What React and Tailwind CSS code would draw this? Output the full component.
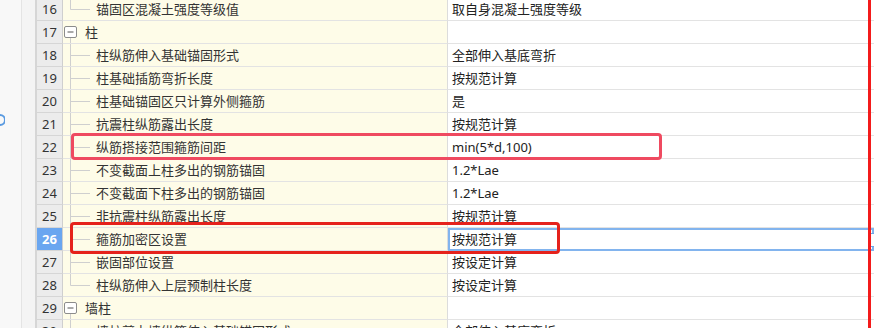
import React from "react";

const rows = [
  { n: 16, type: "child", last: true, name: "锚固区混凝土强度等级值", value: "取自身混凝土强度等级" },
  { n: 17, type: "parent", name: "柱", value: "" },
  { n: 18, type: "child", name: "柱纵筋伸入基础锚固形式", value: "全部伸入基底弯折" },
  { n: 19, type: "child", name: "柱基础插筋弯折长度", value: "按规范计算" },
  { n: 20, type: "child", name: "柱基础锚固区只计算外侧箍筋", value: "是" },
  { n: 21, type: "child", name: "抗震柱纵筋露出长度", value: "按规范计算" },
  { n: 22, type: "child", name: "纵筋搭接范围箍筋间距", value: "min(5*d,100)" },
  { n: 23, type: "child", name: "不变截面上柱多出的钢筋锚固", value: "1.2*Lae" },
  { n: 24, type: "child", name: "不变截面下柱多出的钢筋锚固", value: "1.2*Lae" },
  { n: 25, type: "child", name: "非抗震柱纵筋露出长度", value: "按规范计算" },
  { n: 26, type: "child", name: "箍筋加密区设置", value: "按规范计算", sel: true },
  { n: 27, type: "child", name: "嵌固部位设置", value: "按设定计算" },
  { n: 28, type: "child", last: true, name: "柱纵筋伸入上层预制柱长度", value: "按设定计算" },
  { n: 29, type: "parent", name: "墙柱", value: "" },
  { n: 30, type: "child", name: "墙柱剪力墙纵筋伸入基础锚固形式", value: "全部伸入基底弯折" },
];

function TreeChild({ last }) {
  return (
    <svg width="33" height="22" className="shrink-0">
      <line x1="7.5" y1="0" x2="7.5" y2={last ? 11.5 : 22} stroke="#cfcfcf" strokeWidth="1" />
      <line x1="7.5" y1="11.5" x2="27" y2="11.5" stroke="#cfcfcf" strokeWidth="1" />
    </svg>
  );
}

function TreeParent() {
  return (
    <svg width="22" height="22" className="shrink-0">
      <line x1="7.5" y1="17" x2="7.5" y2="22" stroke="#cfcfcf" strokeWidth="1" />
      <rect x="1.5" y="5.5" width="12" height="11" rx="1.5" fill="#ffffff" stroke="#8c8c8c" strokeWidth="1" />
      <line x1="4.5" y1="11" x2="10.5" y2="11" stroke="#555555" strokeWidth="1" />
    </svg>
  );
}

function Row({ r }) {
  return (
    <div className="flex h-[23px] shrink-0">
      <div
        className={
          r.sel
            ? "w-[26px] shrink-0 border-r border-b border-r-[#cfcfcf] border-b-[#d6d6d6] bg-[#6aa6f0] text-white font-bold flex items-center justify-center"
            : "w-[26px] shrink-0 border-r border-b border-r-[#cfcfcf] border-b-[#d6d6d6] bg-[#ececec] text-[#333333] flex items-center justify-center"
        }
      >
        {r.n}
      </div>
      <div className="w-[385px] shrink-0 bg-[#fefce8] border-r border-b border-r-[#dcdcdc] border-b-[#e3e3e3] flex items-center text-[#333333] whitespace-nowrap overflow-hidden">
        {r.type === "parent" ? <TreeParent /> : <TreeChild last={r.last} />}
        <span>{r.name}</span>
      </div>
      {r.sel ? (
        <div className="flex-1 bg-white border-2 border-[#82b4ee] flex items-center pl-[2px] text-[#222222] whitespace-nowrap">
          <span>{r.value}</span>
          <div className="ml-auto mr-[-10px] w-[14px] h-[14px] rounded-[3px] border border-[#6aa5e6] bg-white"></div>
        </div>
      ) : (
        <div className="flex-1 bg-white border-b border-[#e3e3e3] flex items-center pl-[4px] text-[#222222] whitespace-nowrap">
          {r.value}
        </div>
      )}
    </div>
  );
}

export default function App() {
  return (
    <div
      className="relative w-[874px] h-[328px] overflow-hidden flex bg-white text-[13px] leading-none"
      style={{ fontFamily: '"Noto Sans", "Noto Sans CJK SC", sans-serif' }}
    >
      <div className="w-[22px] shrink-0 bg-[#f8f8f8] border-r border-[#e4e4e4] pt-[114px]">
        <svg width="5" height="12">
          <path d="M0 1 A5 5 0 0 1 0 11" fill="none" stroke="#5a9ae0" strokeWidth="2" />
        </svg>
      </div>
      <div className="w-[15px] shrink-0 bg-[#f4f4f4] border-r-2 border-[#d6d6d6]"></div>
      <div className="flex-1 flex flex-col mt-[-2px]">
        {rows.map((r) => (
          <Row key={r.n} r={r} />
        ))}
      </div>

      <div className="absolute left-[71px] top-[133px] w-[591px] h-[27px] border-[3px] border-[#ef4a60] rounded-[4px]"></div>
      <div className="absolute left-[70px] top-[222px] w-[490px] h-[32px] border-[3px] border-[#e5221c] rounded-[4px]"></div>
      <div className="absolute left-[868px] top-0 w-[3px] h-full bg-[#f31b1b]"></div>
    </div>
  );
}
